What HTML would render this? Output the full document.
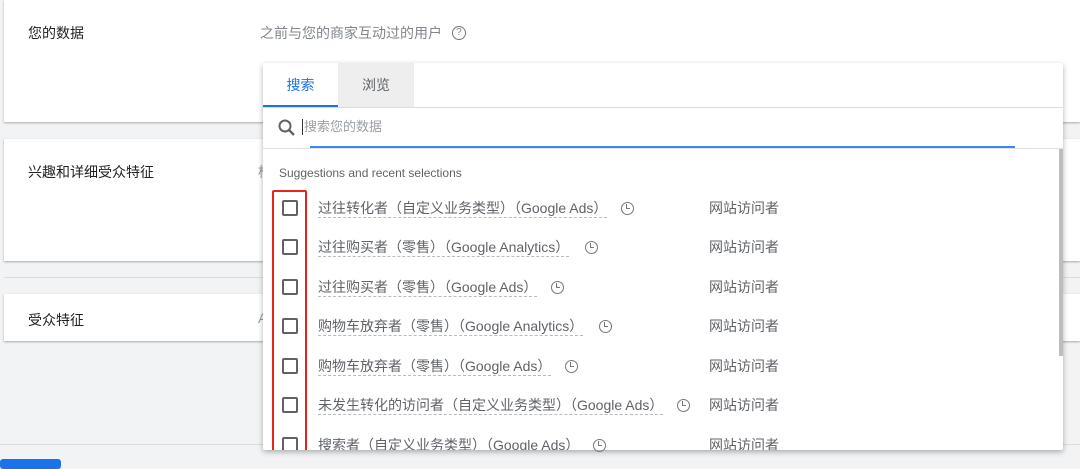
<!DOCTYPE html>
<html><head><meta charset="utf-8"><style>
*{margin:0;padding:0;box-sizing:border-box}
body{width:1080px;height:466px;overflow:hidden;background:#f1f3f4;font-family:"Liberation Sans","Noto Sans CJK SC",sans-serif;position:relative;color:#3c4043}
.card{position:absolute;left:4px;right:0;background:#fff;box-shadow:0 1px 2px rgba(0,0,0,.3)}
.lbl{position:absolute;left:24px;font-size:14px;color:#202124}
.pop{position:absolute;left:263px;top:63px;width:800px;height:387px;background:#fff;box-shadow:0 2px 6px rgba(0,0,0,.3);border-radius:2px;overflow:hidden}
.row{position:absolute;left:0;width:780px;height:39px;font-size:14px;color:#5f6368}
.cb{position:absolute;left:19px;top:8px;width:16px;height:16px;border:2px solid #5f6368;border-radius:2px}
.t{position:absolute;left:55px;top:7px;border-bottom:1px dashed #bbb;line-height:18px;white-space:nowrap}
.w{position:absolute;left:446px;top:7px;line-height:18px}
.ck{position:absolute;width:13px;height:13px;border:1.5px solid #777;border-radius:50%}
.ck:after{content:"";position:absolute;left:4px;top:1px;width:3px;height:4px;border-left:1.5px solid #777;border-bottom:1.5px solid #777}
</style></head><body>
<div class="card" style="top:0;height:122px"><div class="lbl" style="top:23px">您的数据</div>
<div style="position:absolute;left:256px;top:23px;font-size:14px;color:#80868b">之前与您的商家互动过的用户 <span style="display:inline-block;width:14px;height:14px;border:1.3px solid #777;border-radius:50%;font-size:10px;line-height:12px;text-align:center;vertical-align:3px;margin-left:6px">?</span></div></div>
<div class="card" style="top:139px;height:122px"><div class="lbl" style="top:23px">兴趣和详细受众特征</div><div style="position:absolute;left:254px;top:23px;font-size:14px;color:#999">梧</div></div>
<div style="position:absolute;left:4px;right:0;top:277px;height:1px;background:#dadce0"></div>
<div class="card" style="top:294px;height:47px"><div class="lbl" style="top:16px">受众特征</div><div style="position:absolute;left:254px;top:16px;font-size:14px;color:#999">A</div></div>
<div style="position:absolute;left:0;right:0;top:444px;height:1px;background:#dadce0"></div>
<div style="position:absolute;left:0;top:459px;width:61px;height:10px;background:#1a73e8;border-radius:3px"></div>
<div class="pop">
<div style="position:absolute;left:0;top:0;width:75px;height:44px;text-align:center;line-height:44px;font-size:14px;color:#1a73e8;border-bottom:2px solid #1a73e8">搜索</div>
<div style="position:absolute;left:75px;top:0;width:76px;height:44px;background:#eee;text-align:center;line-height:44px;font-size:14px;color:#5f6368">浏览</div>
<div style="position:absolute;left:0;right:0;top:44px;height:1px;background:#dadce0"></div>
<svg style="position:absolute;left:14px;top:55px" width="20" height="20" viewBox="0 0 20 20"><circle cx="8" cy="8" r="5.5" fill="none" stroke="#5f6368" stroke-width="2"/><path d="M12 12l5 5" stroke="#5f6368" stroke-width="2.4"/></svg>
<div style="position:absolute;left:39px;top:56px;font-size:13px;color:#9aa0a6;border-left:1px solid #333;padding-left:1px;line-height:16px">搜索您的数据</div>
<div style="position:absolute;left:47px;width:705px;top:83px;height:2px;background:#4285f4"></div>
<div style="position:absolute;left:0;right:0;top:85px;height:1px;background:#e0e0e0"></div>
<div style="position:absolute;right:0;top:86px;width:4px;height:207px;background:#bdbdbd"></div>
<div style="position:absolute;left:16px;top:103px;font-size:12px;color:#5f6368">Suggestions and recent selections</div>
<div class="row" style="top:129px"><div class="cb"></div><div class="t">过往转化者（自定义业务类型）（Google Ads）</div><div class="w">网站访问者</div></div>
<div class="row" style="top:168px"><div class="cb"></div><div class="t">过往购买者（零售）（Google Analytics）</div><div class="w">网站访问者</div></div>
<div class="row" style="top:208px"><div class="cb"></div><div class="t">过往购买者（零售）（Google Ads）</div><div class="w">网站访问者</div></div>
<div class="row" style="top:247px"><div class="cb"></div><div class="t">购物车放弃者（零售）（Google Analytics）</div><div class="w">网站访问者</div></div>
<div class="row" style="top:287px"><div class="cb"></div><div class="t">购物车放弃者（零售）（Google Ads）</div><div class="w">网站访问者</div></div>
<div class="row" style="top:326px"><div class="cb"></div><div class="t">未发生转化的访问者（自定义业务类型）（Google Ads）</div><div class="w">网站访问者</div></div>
<div class="row" style="top:366px"><div class="cb"></div><div class="t">搜索者（自定义业务类型）（Google Ads）</div><div class="w">网站访问者</div></div>
<div style="position:absolute;left:9px;top:127px;width:35px;height:262px;border:2px solid #e8231b;border-radius:2px"></div>
</div>
<div class="ck" style="left:621px;top:202px"></div>
<div class="ck" style="left:585px;top:241px"></div>
<div class="ck" style="left:551px;top:281px"></div>
<div class="ck" style="left:599px;top:320px"></div>
<div class="ck" style="left:565px;top:360px"></div>
<div class="ck" style="left:677px;top:399px"></div>
<div class="ck" style="left:593px;top:439px"></div>
</body></html>
